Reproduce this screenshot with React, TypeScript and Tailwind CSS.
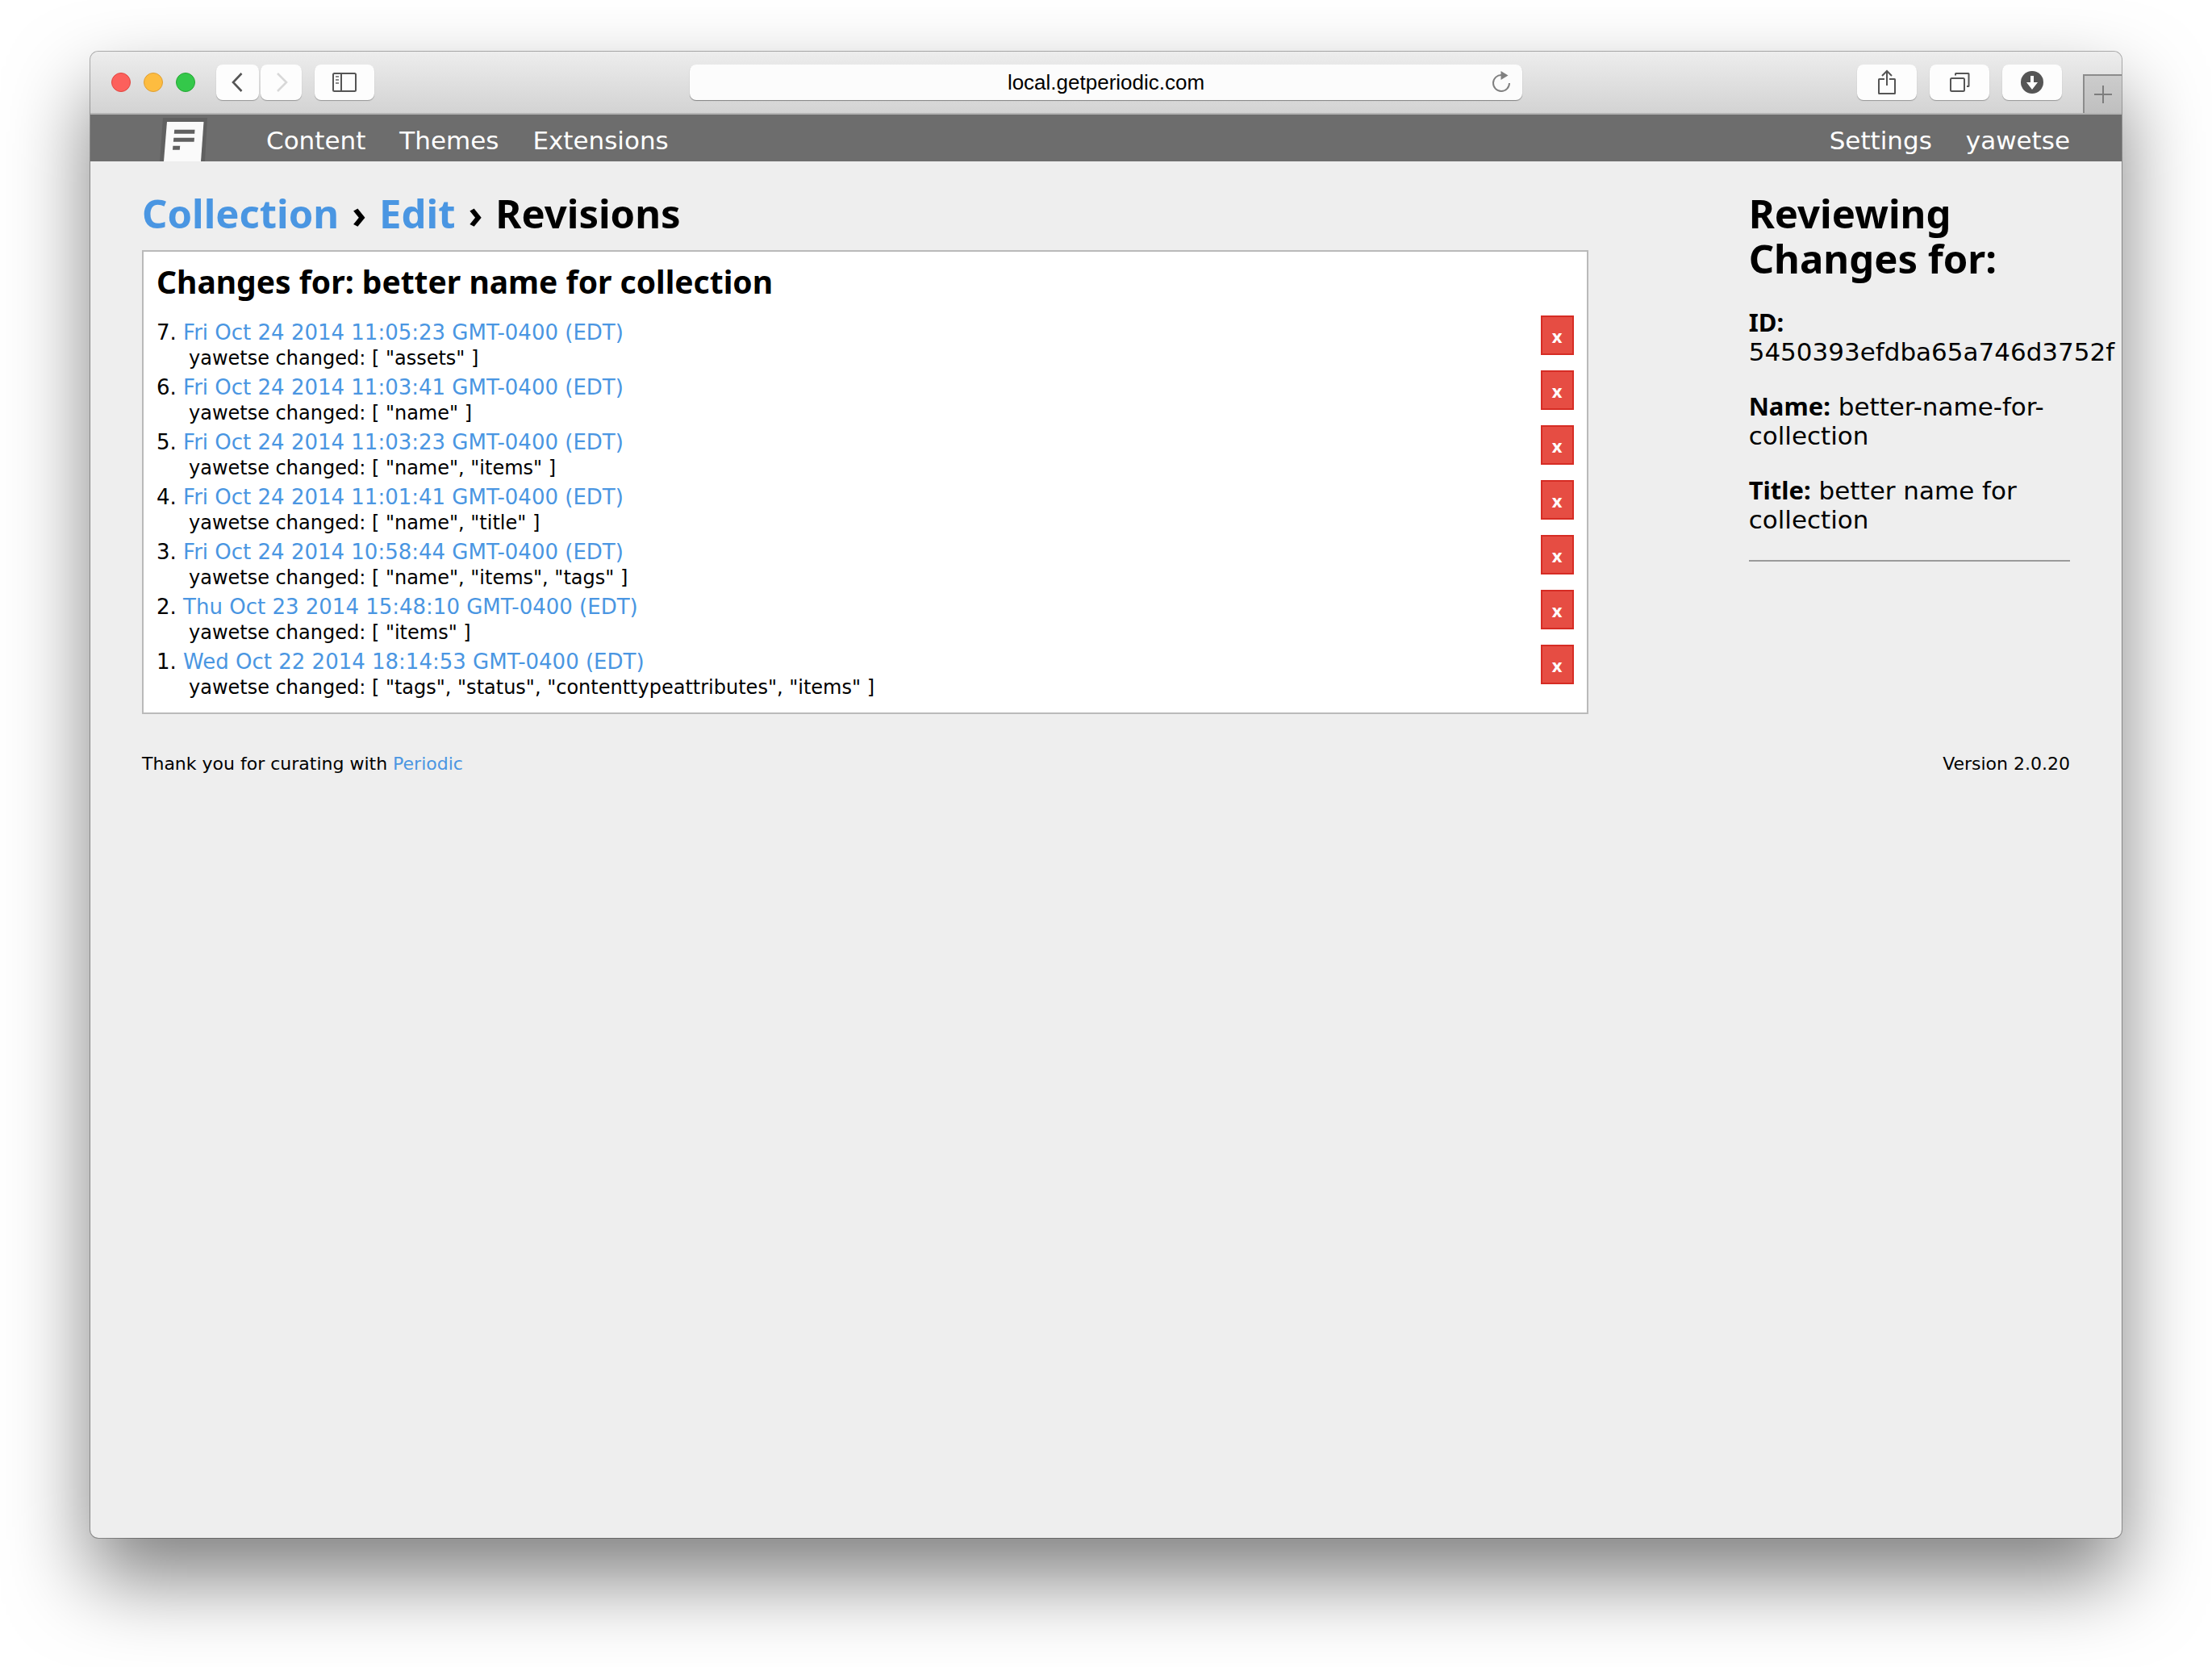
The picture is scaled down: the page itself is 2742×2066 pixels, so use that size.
import type { ReactNode } from 'react';

type Revision = { id: number; date: string; fields: string[] };

const revisions: Revision[] = [
  { id: 7, date: 'Fri Oct 24 2014 11:05:23 GMT-0400 (EDT)', fields: ['assets'] },
  { id: 6, date: 'Fri Oct 24 2014 11:03:41 GMT-0400 (EDT)', fields: ['name'] },
  { id: 5, date: 'Fri Oct 24 2014 11:03:23 GMT-0400 (EDT)', fields: ['name', 'items'] },
  { id: 4, date: 'Fri Oct 24 2014 11:01:41 GMT-0400 (EDT)', fields: ['name', 'title'] },
  { id: 3, date: 'Fri Oct 24 2014 10:58:44 GMT-0400 (EDT)', fields: ['name', 'items', 'tags'] },
  { id: 2, date: 'Thu Oct 23 2014 15:48:10 GMT-0400 (EDT)', fields: ['items'] },
  { id: 1, date: 'Wed Oct 22 2014 18:14:53 GMT-0400 (EDT)', fields: ['tags', 'status', 'contenttypeattributes', 'items'] },
];

function ChromeButton({ label, className, children }: { label: string; className: string; children: ReactNode }) {
  return (
    <button
      type="button"
      aria-label={label}
      className={`flex h-11 shrink-0 items-center justify-center rounded-lg bg-[#fdfdfd] shadow-[0_1px_1px_rgba(0,0,0,0.3)] ${className}`}
    >
      {children}
    </button>
  );
}

function Toolbar() {
  return (
    <header className="grid h-[78px] grid-cols-[1fr_41%_1fr] items-center border-b-2 border-[#b4b4b4] bg-linear-to-b from-[#ededed] to-[#d3d3d3]">
      <div className="flex items-center pl-[26px]">
        <div className="flex gap-4">
          <button type="button" aria-label="Close window" className="size-6 rounded-full border border-[#e24640] bg-[#fc605c]" />
          <button type="button" aria-label="Minimize window" className="size-6 rounded-full border border-[#de9f34] bg-[#fdbc40]" />
          <button type="button" aria-label="Zoom window" className="size-6 rounded-full border border-[#25a734] bg-[#34c84a]" />
        </div>
        <div className="ml-[26px] flex gap-0.5">
          <ChromeButton label="Back" className="w-[53px]">
            <svg width="16" height="26" viewBox="0 0 16 26" fill="none" stroke="#555" strokeWidth="2.6">
              <path d="M12.500 2 2 13l10.500 11" />
            </svg>
          </ChromeButton>
          <ChromeButton label="Forward" className="w-[51px]">
            <svg width="16" height="26" viewBox="0 0 16 26" fill="none" stroke="#d8d8d8" strokeWidth="2.6">
              <path d="m3 2 11 11L3 24" />
            </svg>
          </ChromeButton>
        </div>
        <ChromeButton label="Show sidebar" className="ml-4 w-[74px]">
          <svg width="30" height="24" viewBox="0 0 30 24" fill="none" stroke="#555" strokeWidth="2">
            <rect x="1" y="1" width="28" height="22" rx="1.5" />
            <path d="M11 1v22" />
            <path d="M4 5h4M4 9h4M4 13h4" stroke="#8a8a8a" />
          </svg>
        </ChromeButton>
      </div>
      <div className="relative">
        <input
          type="text"
          aria-label="Address"
          defaultValue="local.getperiodic.com"
          className="block h-11 w-full rounded-lg bg-[#fcfcfc] text-center font-['Liberation_Sans',sans-serif] text-[26px] text-black shadow-[0_1px_1px_rgba(0,0,0,0.4)] outline-none"
        />
        <button type="button" aria-label="Reload" className="absolute inset-y-0 right-3.5 flex items-center">
          <svg width="24" height="28" viewBox="0 0 24 28" fill="none" stroke="#808080" strokeWidth="2">
            <path d="M22 15a10 10 0 1 1-9.500-10" />
            <path d="M11.500 0 20.500 5.500 11.500 11z" fill="#808080" stroke="none" />
          </svg>
        </button>
      </div>
      <div className="flex h-full items-center justify-end">
        <div className="flex gap-4">
          <ChromeButton label="Share" className="w-[74px]">
            <svg width="24" height="32" viewBox="0 0 24 32" fill="none" stroke="#555" strokeWidth="2">
              <path d="M9 12H2.500Q2 12 2 12.500V29.500Q2 30 2.500 30h19q.5 0 .5-.5V12.500q0-.5-.5-.5H15" />
              <path d="M12 20V2M6 8l6-6 6 6" />
            </svg>
          </ChromeButton>
          <ChromeButton label="Show all tabs" className="w-[74px]">
            <svg width="26" height="26" viewBox="0 0 26 26" fill="none" stroke="#555" strokeWidth="2">
              <rect x="2" y="8" width="17" height="16" rx="1.500" />
              <path d="M8 4.500V2.500Q8 2 8.500 2H24q.5 0 .5.500V17.500q0 .5-.5.500h-2" />
            </svg>
          </ChromeButton>
          <ChromeButton label="Downloads" className="w-[74px]">
            <svg width="28" height="28" viewBox="0 0 28 28">
              <circle cx="14" cy="14" r="14" fill="#555" />
              <path d="M12 6h4v8h5l-7 9-7-9h5z" fill="#fff" />
            </svg>
          </ChromeButton>
        </div>
        <button
          type="button"
          aria-label="New tab"
          className="ml-[26px] flex h-12 w-12 items-center justify-center self-end border-t-2 border-l-2 border-[#8c8c8c] bg-linear-to-b from-[#cccccc] to-[#bfbfbf]"
        >
          <svg width="22" height="22" viewBox="0 0 22 22" stroke="#7d7d7d" strokeWidth="2">
            <path d="M11 0v22M0 11h22" />
          </svg>
        </button>
      </div>
    </header>
  );
}

function AdminNav() {
  return (
    <nav className="flex h-[58px] justify-between bg-[#6d6d6d] pr-16 pl-[86px] text-[31px] leading-9 text-white">
      <div className="flex">
        <a href="#home" aria-label="Periodic home" className="self-end">
          <svg width="60" height="54" viewBox="0 0 60 54" className="block">
            <path d="M4 0H59L56 54H0z" fill="#606060" />
            <path d="M9 5H54.500L51 54H5z" fill="#fafafa" />
            <path d="M18.200 14.800H43.500L43.200 19.700H17.800zM17.300 24.800H43L42.600 29.700H16.900zM16.400 34.800H25.200L24.800 39.700H16z" fill="#606060" />
          </svg>
        </a>
        <div className="ml-[72px] flex gap-[42px] pt-3.5">
          <a href="#content">Content</a>
          <a href="#themes">Themes</a>
          <a href="#extensions">Extensions</a>
        </div>
      </div>
      <div className="flex gap-[42px] pt-3.5">
        <a href="#settings">Settings</a>
        <a href="#yawetse">yawetse</a>
      </div>
    </nav>
  );
}

function RevisionRow({ revision }: { revision: Revision }) {
  return (
    <li className="flex h-[68px] items-start justify-between">
      <div className="pt-1">
        <p className="text-[26px] leading-[34px]">
          {revision.id}.{' '}
          <a href={`#revision-${revision.id}`} className="text-[#4a96e2]">
            {revision.date}
          </a>
        </p>
        <p className="pl-10 text-[24px] leading-[30px]">
          yawetse changed: [ {revision.fields.map((f) => `"${f}"`).join(', ')} ]
        </p>
      </div>
      <button
        type="button"
        aria-label={`Delete revision ${revision.id}`}
        className="flex h-[49px] w-[41px] items-center justify-center border-2 border-[#d62c24] bg-[#e64d43] font-['Noto_Sans',sans-serif] text-[22px] leading-none font-bold text-white"
      >
        x
      </button>
    </li>
  );
}

function Detail({ label, children }: { label: string; children: ReactNode }) {
  return (
    <p>
      <strong className="font-['Noto_Sans',sans-serif] leading-none">{label}</strong> {children}
    </p>
  );
}

export default function App() {
  return (
    <div className="flex min-h-screen flex-col bg-white px-28 pt-16 pb-40 font-['DejaVu_Sans',sans-serif] text-black">
      <div className="flex flex-1 flex-col overflow-hidden rounded-[10px] bg-[#eeeeee] shadow-[0_0_0_1px_rgba(0,0,0,0.3),0_50px_100px_rgba(0,0,0,0.5)]">
        <Toolbar />
        <AdminNav />
        <div className="px-16 pt-9">
          <div className="grid grid-cols-12">
            <main className="col-span-9">
              <h1 className="mb-[18px] flex gap-4 font-['Noto_Sans',sans-serif] text-[49px] leading-14 font-bold">
                <a href="#collection" className="text-[#4a96e2]">Collection</a>
                <span>›</span>
                <a href="#edit" className="text-[#4a96e2]">Edit</a>
                <span>›</span>
                <span>Revisions</span>
              </h1>
              <section className="border-2 border-[#bababa] bg-white p-4">
                <h2 className="mb-[21px] font-['Noto_Sans',sans-serif] text-[39px] leading-[42px] font-bold">
                  Changes for: better name for collection
                </h2>
                <ol>
                  {revisions.map((r) => (
                    <RevisionRow key={r.id} revision={r} />
                  ))}
                </ol>
              </section>
            </main>
            <aside className="col-span-2 col-start-11">
              <h2 className="mb-[34px] font-['Noto_Sans',sans-serif] text-[49px] leading-14 font-bold">Reviewing Changes for:</h2>
              <div className="flex flex-col gap-8 text-[31px] leading-9">
                <Detail label="ID:">5450393efdba65a746d3752f</Detail>
                <Detail label="Name:">better-name-for-collection</Detail>
                <Detail label="Title:">better name for collection</Detail>
                <hr className="border-t-2 border-[#9a9a9a]" />
              </div>
            </aside>
          </div>
          <footer className="mt-12 flex justify-between text-[22px] leading-7">
            <p>
              Thank you for curating with <a href="#periodic" className="text-[#4a96e2]">Periodic</a>
            </p>
            <p>Version 2.0.20</p>
          </footer>
        </div>
      </div>
    </div>
  );
}
